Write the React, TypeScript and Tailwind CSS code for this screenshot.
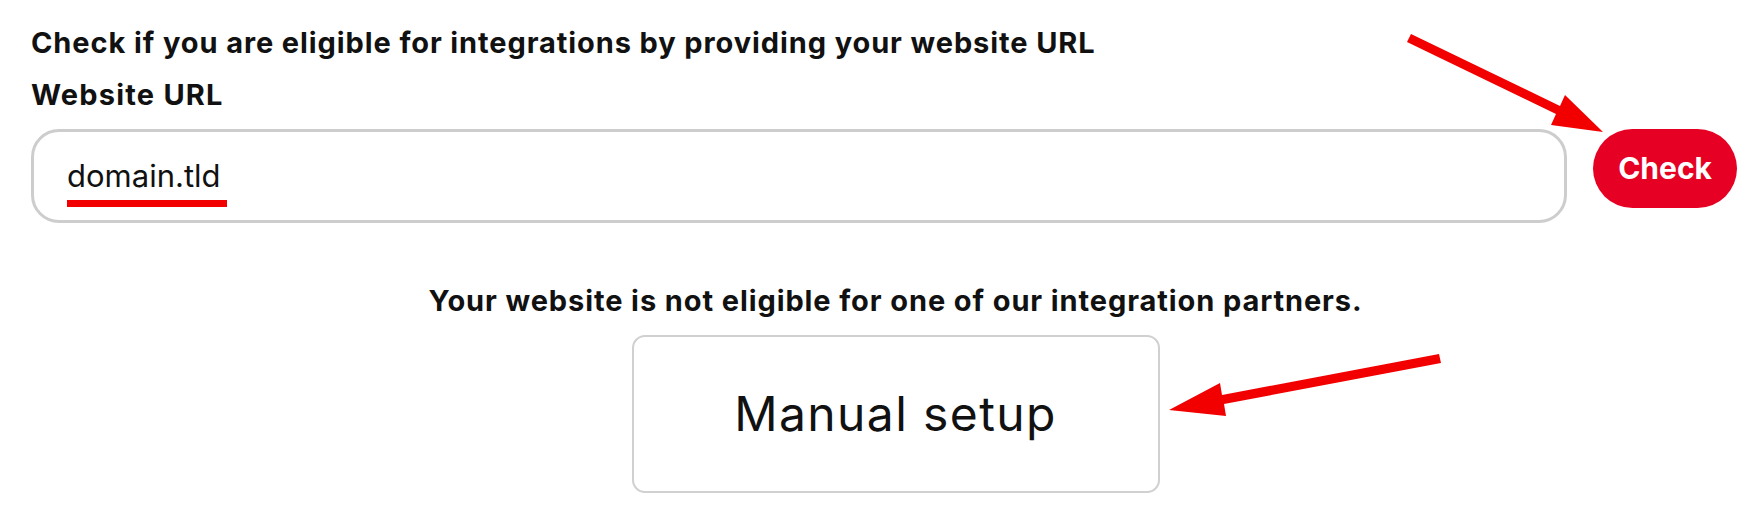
import React from "react";

function Arrows() {
  return (
    <svg
      className="absolute left-0 top-0 pointer-events-none"
      width={1746}
      height={524}
      viewBox="0 0 1746 524"
    >
      <polygon
        fill="#f20000"
        points="1411,34 1560,106 1565,95 1603,132 1551,125 1556,114 1407,42"
      />
      <polygon
        fill="#f20000"
        points="1439,354 1222,395 1220,383 1169,410 1226,416 1224,404 1441,363"
      />
    </svg>
  );
}

export default function App() {
  return (
    <div
      className="relative w-[1746px] h-[524px] bg-white text-[#111111] overflow-hidden"
      style={{ fontFamily: "Inter, 'Noto Sans', sans-serif" }}
    >
      <div className="flex flex-col pl-[31px] pr-[9px] pt-[25px]">
        <h1 className="text-[29px] leading-[36px] font-bold tracking-[0.9px]">
          Check if you are eligible for integrations by providing your website URL
        </h1>
        <label className="mt-[16px] text-[29px] leading-[36px] font-bold tracking-[1.2px]">
          Website URL
        </label>
        <div className="mt-[16px] flex items-start gap-[26px]">
          <div className="w-[1537px] h-[94px] rounded-[28px] border-[3px] border-[#cdcdcd] flex items-center pl-[33px]">
            <div className="relative">
              <span className="text-[31px] leading-[40px] font-normal">domain.tld</span>
              <div className="absolute left-0 top-[44px] w-[160px] h-[7px] bg-[#f20000]" />
            </div>
          </div>
          <button className="w-[144px] h-[79px] rounded-full bg-[#e60023] text-white text-[30px] font-bold">
            Check
          </button>
        </div>
        <div className="flex flex-col items-center pl-[23px] mt-[60px]">
          <p className="text-[29px] leading-[36px] font-bold tracking-[0.9px]">
            Your website is not eligible for one of our integration partners.
          </p>
          <button className="mt-[16px] w-[528px] h-[158px] rounded-[13px] border-2 border-[#d0d0d0] bg-white text-[48px] font-normal tracking-[1.4px]">
            Manual setup
          </button>
        </div>
      </div>
      <Arrows />
    </div>
  );
}
